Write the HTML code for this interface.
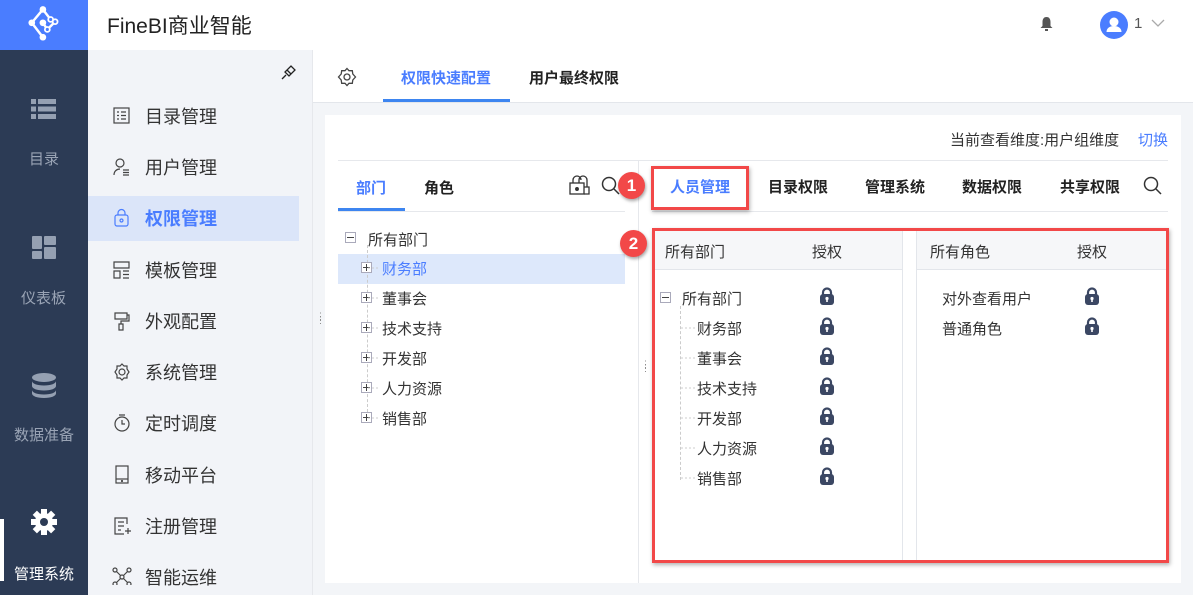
<!DOCTYPE html>
<html><head><meta charset="utf-8"><style>
*{margin:0;padding:0;box-sizing:border-box}
body{width:1193px;height:595px;overflow:hidden;position:relative;background:#f3f5f8;font-family:"Liberation Sans","Noto Sans CJK SC",sans-serif;color:#333}
.a{position:absolute}
.t{position:absolute;white-space:nowrap}
.pl{position:absolute;width:11px;height:11px;border:1px solid #aab;background:#fff}
.pl:before{content:"";position:absolute;left:1px;top:4px;width:7px;height:1px;background:#444}
.pl.p:after{content:"";position:absolute;left:4px;top:1px;width:1px;height:7px;background:#444}
</style></head><body>
<!-- top bar -->
<div class="a" style="left:0;top:0;width:1193px;height:50px;background:#fff;box-shadow:0 2px 4px rgba(0,0,0,.06)"></div>
<div class="a" style="left:0;top:0;width:88px;height:50px;background:#4a7dff"></div>
<svg class="a" style="left:24px;top:5px" width="40" height="40" viewBox="0 0 36 36"><g stroke="#fff" stroke-width="2.2" fill="none"><path d="M17 4L7 16L17 29M17 4L24 13M17 16L21 22L28 15L24 13"/></g><g fill="#fff"><circle cx="17" cy="4" r="3"/><circle cx="7" cy="16" r="3"/><circle cx="17" cy="29" r="3"/><circle cx="17" cy="16" r="3"/></g><g fill="#4a7dff" stroke="#fff" stroke-width="1.6"><circle cx="24" cy="13" r="2.2"/><circle cx="28" cy="15" r="2.2"/><circle cx="21" cy="22" r="2.2"/></g></svg>
<div class="t" style="left:107px;top:10px;font-size:21px;color:#222">FineBI商业智能</div>
<svg class="a" style="left:1039px;top:16px" width="15" height="16" viewBox="0 0 15 16"><path d="M7.5 1C4.5 1 3.5 3.5 3.5 6v4L1.5 12h12l-2-2V6c0-2.5-1-5-4-5z" fill="#555"/><rect x="6" y="13" width="3" height="2" fill="#555"/></svg>
<div class="a" style="left:1100px;top:11px;width:28px;height:28px;border-radius:50%;background:#4a7dff"></div>
<svg class="a" style="left:1100px;top:11px" width="28" height="28"><circle cx="14" cy="11" r="4.5" fill="#fff"/><path d="M6.5 21c0-4 3.5-6 7.5-6s7.5 2 7.5 6z" fill="#fff"/></svg>
<div class="t" style="left:1134px;top:15px;font-size:15px;color:#555">1</div>
<svg class="a" style="left:1151px;top:19px" width="14" height="9"><path d="M1 1l6 6 6-6" stroke="#aaa" stroke-width="1.3" fill="none"/></svg>

<!-- dark sidebar -->
<div class="a" style="left:0;top:50px;width:88px;height:545px;background:#2c3b55"></div>
<svg class="a" style="left:31px;top:99px" width="25" height="20"><g fill="#95a0b2"><rect x="0" y="0" width="5" height="5"/><rect x="7" y="0" width="18" height="5"/><rect x="0" y="7.5" width="5" height="5"/><rect x="7" y="7.5" width="18" height="5"/><rect x="0" y="15" width="5" height="5"/><rect x="7" y="15" width="18" height="5"/></g></svg>
<div class="t" style="left:29px;top:148px;font-size:15px;color:#9aa4b5">目录</div>
<svg class="a" style="left:32px;top:236px" width="24" height="23"><g fill="#95a0b2"><rect x="0" y="0" width="10" height="13" rx="1"/><rect x="12" y="0" width="12" height="9" rx="1"/><rect x="0" y="15" width="10" height="8" rx="1"/><rect x="12" y="11" width="12" height="12" rx="1"/></g></svg>
<div class="t" style="left:21px;top:287px;font-size:15px;color:#9aa4b5">仪表板</div>
<svg class="a" style="left:32px;top:373px" width="24" height="25"><g fill="#95a0b2"><ellipse cx="12" cy="4.5" rx="12" ry="4.5"/><path d="M0 8c0 2.5 5 4.5 12 4.5S24 10.5 24 8v5c0 2.5-5 4.5-12 4.5S0 15.5 0 13z"/><path d="M0 17c0 2.5 5 4.5 12 4.5S24 19.5 24 17v3.5c0 2.5-5 4.5-12 4.5S0 23 0 20.5z"/></g></svg>
<div class="t" style="left:14px;top:424px;font-size:15px;color:#9aa4b5">数据准备</div>
<div class="a" style="left:0;top:519px;width:4px;height:62px;background:#fff"></div>
<svg class="a" style="left:31px;top:509px" width="26" height="26" viewBox="0 0 26 26"><g fill="#fff"><circle cx="13" cy="13" r="9"/><g transform="translate(13 13)"><rect x="-3" y="-13" width="6" height="6"/><rect x="-3" y="7" width="6" height="6"/><rect x="-13" y="-3" width="6" height="6"/><rect x="7" y="-3" width="6" height="6"/><g transform="rotate(45)"><rect x="-3" y="-13" width="6" height="6"/><rect x="-3" y="7" width="6" height="6"/><rect x="-13" y="-3" width="6" height="6"/><rect x="7" y="-3" width="6" height="6"/></g></g></g><circle cx="13" cy="13" r="4" fill="#2c3b55"/></svg>
<div class="t" style="left:14px;top:563px;font-size:15px;color:#fff">管理系统</div>

<!-- menu sidebar -->
<div class="a" style="left:88px;top:50px;width:225px;height:545px;background:#f2f4f8;border-right:1px solid #e6e8ec"></div>
<svg class="a" style="left:281px;top:64px" width="16" height="16" viewBox="0 0 16 16"><g stroke="#222" stroke-width="1.3" fill="none"><path d="M1 15l4-4"/><path d="M4 8l4 4 6-6-4-4z"/><path d="M6 6l4 4"/></g></svg>
<div class="a" style="left:88px;top:196px;width:211px;height:45px;background:#dbe5f9"></div>
<div class="t" style="left:145px;top:103px;font-size:18px;color:#333">目录管理</div>
<div class="t" style="left:145px;top:154px;font-size:18px;color:#333">用户管理</div>
<div class="t" style="left:145px;top:205px;font-size:18px;color:#4a7dff;font-weight:bold">权限管理</div>
<div class="t" style="left:145px;top:257px;font-size:18px;color:#333">模板管理</div>
<div class="t" style="left:145px;top:308px;font-size:18px;color:#333">外观配置</div>
<div class="t" style="left:145px;top:359px;font-size:18px;color:#333">系统管理</div>
<div class="t" style="left:145px;top:410px;font-size:18px;color:#333">定时调度</div>
<div class="t" style="left:145px;top:462px;font-size:18px;color:#333">移动平台</div>
<div class="t" style="left:145px;top:513px;font-size:18px;color:#333">注册管理</div>
<div class="t" style="left:145px;top:564px;font-size:18px;color:#333">智能运维</div>
<svg class="a" style="left:112px;top:105px" width="20" height="480" fill="none" stroke="#444" stroke-width="1.2">
<rect x="2" y="3" width="15" height="15"/><path d="M5 7h2M9 7h5M5 10.5h2M9 10.5h5M5 14h2M9 14h5"/>
<g transform="translate(0 51)"><circle cx="8" cy="7" r="4"/><path d="M2 19c0-4 3-6 6-6M11 14h6M11 16.5h6M11 19h6"/></g>
<g transform="translate(0 102)" stroke="#4a7dff"><rect x="3" y="8" width="13" height="11" rx="2"/><path d="M6 8V6a3.5 3.5 0 017 0v2"/><circle cx="9.5" cy="13.5" r="1.5"/></g>
<g transform="translate(0 154)"><path d="M2 3h15v6H2zM2 12h6v7H2zM11 12h6M11 15.5h6M11 19h6"/></g>
<g transform="translate(0 205)"><path d="M3 3h12v6H3zM15 5h2v6H9v3M7 14h4v6H7z"/></g>
<g transform="translate(0 256)"><circle cx="10" cy="11" r="3"/><path d="M10 3l2 2h3v3l2 3-2 3v3h-3l-2 2-2-2H5v-3l-2-3 2-3V5h3z"/></g>
<g transform="translate(0 307)"><circle cx="10" cy="12" r="7"/><path d="M10 8v4h3M7 3h6"/></g>
<g transform="translate(0 359)"><rect x="4" y="2" width="12" height="17"/><path d="M4 15h12"/><circle cx="10" cy="17" r=".5"/></g>
<g transform="translate(0 410)"><path d="M15 9V3H3v16h9M6 7h6M6 11h6M6 15h3M13 16h6M16 13v6"/></g>
<g transform="translate(0 461)"><circle cx="3" cy="4" r="2"/><circle cx="17" cy="4" r="2"/><circle cx="3" cy="18" r="2"/><circle cx="17" cy="18" r="2"/><circle cx="10" cy="11" r="2"/><path d="M4.5 5.5l4 4M15.5 5.5l-4 4M4.5 16.5l4-4M15.5 16.5l-4-4"/></g>
</svg>

<!-- tab bar -->
<div class="a" style="left:313px;top:50px;width:880px;height:53px;background:#fff;border-bottom:1px solid #e3e6eb"></div>
<svg class="a" style="left:337px;top:67px" width="20" height="20" viewBox="0 0 20 20" fill="none" stroke="#444" stroke-width="1.3"><circle cx="10" cy="10" r="3"/><path d="M10 1.5l2 2.2h3.3l.5 3.3 2.7 3-2.7 3-.5 3.3H12l-2 2.2-2-2.2H4.7l-.5-3.3-2.7-3 2.7-3 .5-3.3H8z"/></svg>
<div class="t" style="left:401px;top:67px;font-size:15px;color:#4a7dff;font-weight:bold">权限快速配置</div>
<div class="a" style="left:383px;top:99px;width:127px;height:3px;background:#3d85f0"></div>
<div class="t" style="left:529px;top:67px;font-size:15px;color:#222;font-weight:bold">用户最终权限</div>

<!-- card -->
<div class="a" style="left:325px;top:115px;width:856px;height:468px;background:#fff"></div>
<div class="t" style="left:950px;top:129px;font-size:15px;color:#333">当前查看维度:用户组维度</div>
<div class="t" style="left:1138px;top:129px;font-size:15px;color:#4a7dff">切换</div>
<div class="a" style="left:338px;top:160px;width:830px;height:1px;background:#e6e8ec"></div>
<div class="a" style="left:638px;top:160px;width:1px;height:423px;background:#e6e8ec"></div>
<div class="t" style="left:316px;top:314px;font-size:9px;color:#888;line-height:4px">⋮<br>⋮</div>
<div class="t" style="left:641px;top:362px;font-size:9px;color:#888;line-height:4px">⋮<br>⋮</div>

<!-- left panel -->
<div class="t" style="left:356px;top:177px;font-size:15px;color:#4a7dff;font-weight:bold">部门</div>
<div class="t" style="left:424px;top:177px;font-size:15px;color:#222;font-weight:bold">角色</div>
<div class="a" style="left:338px;top:208px;width:67px;height:3px;background:#3d85f0"></div>
<div class="a" style="left:338px;top:211px;width:287px;height:1px;background:#e6e8ec"></div>
<svg class="a" style="left:569px;top:175px" width="22" height="20" fill="none" stroke="#333" stroke-width="1.3"><rect x="1" y="8" width="14" height="11"/><path d="M4 8V5a4 4 0 018 0M10 8V5a4 4 0 018 0v7M15 12h5v7h-5"/><circle cx="8" cy="14" r="1.3" fill="#333"/></svg>
<svg class="a" style="left:601px;top:176px" width="19" height="19" fill="none" stroke="#333" stroke-width="1.5"><circle cx="8" cy="8" r="6.5"/><path d="M13 13l5 5"/></svg>
<div class="pl" style="left:345px;top:232px"></div>
<div class="t" style="left:368px;top:229px;font-size:15px;color:#333">所有部门</div>
<div class="a" style="left:338px;top:254px;width:287px;height:30px;background:#dde8fb"></div>
<div class="a" style="left:367px;top:245px;width:0;height:172px;border-left:1px dashed #ccc"></div>
<div class="pl p" style="left:361px;top:262px"></div><div class="t" style="left:382px;top:258px;font-size:15px;color:#4a7dff">财务部</div>
<div class="pl p" style="left:361px;top:292px"></div><div class="t" style="left:382px;top:288px;font-size:15px;color:#333">董事会</div>
<div class="pl p" style="left:361px;top:322px"></div><div class="t" style="left:382px;top:318px;font-size:15px;color:#333">技术支持</div>
<div class="pl p" style="left:361px;top:352px"></div><div class="t" style="left:382px;top:348px;font-size:15px;color:#333">开发部</div>
<div class="pl p" style="left:361px;top:382px"></div><div class="t" style="left:382px;top:378px;font-size:15px;color:#333">人力资源</div>
<div class="pl p" style="left:361px;top:412px"></div><div class="t" style="left:382px;top:408px;font-size:15px;color:#333">销售部</div>

<!-- right panel tabs -->
<div class="t" style="left:670px;top:176px;font-size:15px;color:#4a7dff;font-weight:bold">人员管理</div>
<div class="t" style="left:768px;top:176px;font-size:15px;color:#222;font-weight:bold">目录权限</div>
<div class="t" style="left:865px;top:176px;font-size:15px;color:#222;font-weight:bold">管理系统</div>
<div class="t" style="left:962px;top:176px;font-size:15px;color:#222;font-weight:bold">数据权限</div>
<div class="t" style="left:1060px;top:176px;font-size:15px;color:#222;font-weight:bold">共享权限</div>
<svg class="a" style="left:1143px;top:176px" width="19" height="19" fill="none" stroke="#333" stroke-width="1.5"><circle cx="8" cy="8" r="6.5"/><path d="M13 13l5 5"/></svg>
<div class="a" style="left:652px;top:211px;width:516px;height:1px;background:#e6e8ec"></div>
<div class="a" style="left:651px;top:166px;width:98px;height:44px;border:3px solid #f24848;box-shadow:1px 2px 4px rgba(0,0,0,.3)"></div>

<!-- tables -->
<div class="a" style="left:654px;top:231px;width:249px;height:39px;background:#f6f7f9;border-bottom:1px solid #e3e6eb"></div>
<div class="a" style="left:916px;top:231px;width:250px;height:39px;background:#f6f7f9;border-bottom:1px solid #e3e6eb"></div>
<div class="a" style="left:902px;top:231px;width:1px;height:330px;background:#e3e6eb"></div>
<div class="a" style="left:916px;top:231px;width:1px;height:330px;background:#e3e6eb"></div>
<div class="t" style="left:665px;top:241px;font-size:15px;color:#333">所有部门</div>
<div class="t" style="left:812px;top:241px;font-size:15px;color:#333">授权</div>
<div class="t" style="left:930px;top:241px;font-size:15px;color:#333">所有角色</div>
<div class="t" style="left:1077px;top:241px;font-size:15px;color:#333">授权</div>
<div class="pl" style="left:660px;top:292px"></div>
<div class="t" style="left:682px;top:288px;font-size:15px;color:#333">所有部门</div>
<div class="a" style="left:680px;top:306px;width:0;height:174px;border-left:1px dashed #ccc"></div>
<div class="t" style="left:697px;top:318px;font-size:15px;color:#333">财务部</div>
<div class="t" style="left:697px;top:348px;font-size:15px;color:#333">董事会</div>
<div class="t" style="left:697px;top:378px;font-size:15px;color:#333">技术支持</div>
<div class="t" style="left:697px;top:408px;font-size:15px;color:#333">开发部</div>
<div class="t" style="left:697px;top:438px;font-size:15px;color:#333">人力资源</div>
<div class="t" style="left:697px;top:468px;font-size:15px;color:#333">销售部</div>
<div class="t" style="left:942px;top:288px;font-size:15px;color:#333">对外查看用户</div>
<div class="t" style="left:942px;top:318px;font-size:15px;color:#333">普通角色</div>
<svg class="a" style="left:0;top:0" width="1193" height="595">
<defs><g id="L"><path d="M3 8V5.5a4 4 0 018 0V8" stroke="#3b4763" stroke-width="2.2" fill="none"/><rect x="0" y="7" width="14" height="11" rx="3" fill="#3b4763"/><path d="M7 11v4" stroke="#fff" stroke-width="1.6"/><circle cx="7" cy="11.5" r="1.6" fill="#fff"/></g></defs>
<use href="#L" x="820" y="287"/><use href="#L" x="820" y="317"/><use href="#L" x="820" y="347"/><use href="#L" x="820" y="377"/><use href="#L" x="820" y="407"/><use href="#L" x="820" y="437"/><use href="#L" x="820" y="467"/>
<use href="#L" x="1085" y="287"/><use href="#L" x="1085" y="317"/>
<g stroke="#ccc" stroke-dasharray="2 2"><path d="M681 328h14M681 358h14M681 388h14M681 418h14M681 448h14M681 478h14M368 268h12M368 298h12M368 328h12M368 358h12M368 388h12M368 418h12"/></g>
</svg>
<div class="a" style="left:652px;top:228px;width:517px;height:335px;border:3px solid #f24848;box-shadow:1px 2px 4px rgba(0,0,0,.3)"></div>

<!-- badges -->
<div class="a" style="left:618px;top:172px;width:27px;height:27px;border-radius:50%;background:#f24848;box-shadow:1px 2px 3px rgba(0,0,0,.35);color:#fff;font-size:17px;font-weight:bold;text-align:center;line-height:27px">1</div>
<div class="a" style="left:620px;top:230px;width:27px;height:27px;border-radius:50%;background:#f24848;box-shadow:1px 2px 3px rgba(0,0,0,.35);color:#fff;font-size:17px;font-weight:bold;text-align:center;line-height:27px">2</div>
</body></html>
